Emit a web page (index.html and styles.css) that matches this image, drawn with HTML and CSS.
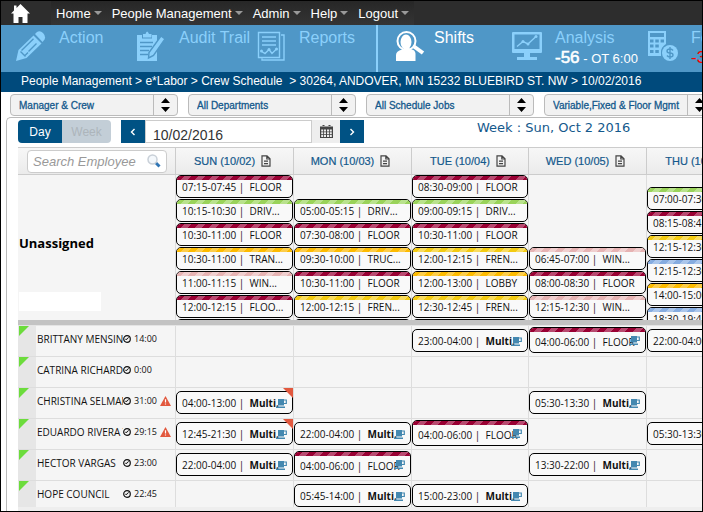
FILE: index.html
```html
<!DOCTYPE html>
<html lang="en">
<head>
<meta charset="utf-8">
<title>Crew Schedule</title>
<link rel="stylesheet" href="styles.css">
</head>
<body>
<svg class="defs" aria-hidden="true">
  <symbol id="doc" viewBox="0 0 10 12"><path d="M1 .8h5l3 3v7.4H1zM5.8 1v3H9M3 6.2h4M3 8.6h4" fill="none" stroke="#444" stroke-width="1.2"/></symbol>
  <symbol id="cup" viewBox="0 0 11 9"><path d="M2 0h6v6.500H2zM0 7.500h9V9H0z" fill="#4488b0"/><path d="M8 1h2.300v3.500H8" fill="none" stroke="#4488b0" stroke-width="1.200"/></symbol>
  <symbol id="clock" viewBox="0 0 8 8"><circle cx="4" cy="4" r="3.300" fill="none" stroke="#111" stroke-width="1.200"/><path d="M5.500 2.300L4 4.300H2.300" fill="none" stroke="#111"/></symbol>
  <symbol id="warn" viewBox="0 0 11 10"><path d="M5.500 0L11 10H0z" fill="#e2583e"/><path d="M5.500 3.200v3.400M5.500 7.400v1.200" stroke="#fff" stroke-width="1.200"/></symbol>
  <symbol id="spin" viewBox="0 0 9 14"><path d="M4.500 0L9 5H0zM0 9h9l-4.500 5z" fill="#000"/></symbol>
</svg>

<nav class="topnav">
  <a class="home" href="#" aria-label="Start page"><svg viewBox="0 0 19 19"><path d="M9.500 0L19 9.500h-2.500V19h-5v-6h-4v6h-5V9.500H0L3 6.500V1.500h2.500V4z" fill="#fff"/></svg></a>
  <div class="menu">
    <a href="#">Home</a><a href="#">People Management</a><a href="#">Admin</a><a href="#">Help</a><a href="#">Logout</a>
  </div>
</nav>

<div class="modules">
  <a class="module" href="#">
    <svg viewBox="0 0 30 30"><path d="M0 30l2.500-11L17.500 4.500l8 8L10.500 27z"/><path d="M19 3l2-2q3-2 6 1t1.500 6.500L26.500 11z"/><path class="cut" d="M5.500 19.500L17.500 7.700M9 24.500l3-3M4.500 20.500l5 5M12.500 20.500L20.500 12.500"/></svg>
    <span>Action</span>
  </a>
  <a class="module" href="#">
    <svg viewBox="0 0 30 30"><path d="M1 4h5v3.500h10V4h5v26H1z"/><path d="M7 3h2.500q1.500-5 3.500 0h2.500v3.500H7z"/><path class="cut" d="M4 11.500h13M4 15.500h12M4 19.500h9M4 23.500h8"/><path class="edge" d="M25 5l4 3-11.500 16.500L12.500 27l.5-5.500z"/></svg>
    <span>Audit Trail</span>
  </a>
  <a class="module" href="#">
    <svg viewBox="0 0 30 30"><path class="line" d="M2.500 1.500h21v25h-21zM25 4h3v25H6v-1.500M6 6h14M6 10h14M6 14h14M5 20l4 2.500 4-4 3 4 5-5"/><circle cx="5.500" cy="20" r="1.500"/><circle cx="13" cy="18.500" r="1.500"/><circle cx="20.500" cy="18" r="1.500"/></svg>
    <span>Reports</span>
  </a>
  <a class="module active" href="#">
    <svg viewBox="0 0 30 30"><path d="M1 30v-6q0-4 6-5.500L10 17h4l3 1.500q3 .5 3.500 4V30q-10 1-19.500 0z"/><ellipse cx="11" cy="11" rx="5.500" ry="7.500"/><circle class="ring" cx="11.500" cy="10" r="9"/><path class="handle" d="M19 15.500l9 6.500"/></svg>
    <span>Shifts</span>
  </a>
  <a class="module wide" href="#">
    <svg viewBox="0 0 30 30"><path d="M1 1h28q1 0 1 1v19q0 1-1 1H1q-1 0-1-1V2q0-1 1-1zM2.500 3.500v14.500h25V3.500zM12 22h6v4h7v3H5v-3h7z" fill-rule="evenodd"/><path class="line" d="M5 15.500l6-5 5 2.500 8-7.500"/><circle cx="11" cy="10.500" r="1.500"/><circle cx="16" cy="13" r="1.500"/><circle cx="24" cy="5.500" r="1.500"/></svg>
    <span>Analysis<small><b>-56</b> - OT 6:00</small></span>
  </a>
  <a class="module" href="#">
    <svg viewBox="0 0 30 30"><path d="M0 0h18v13q-5 3-5 8v4H0zM2 2v4h14V2zM2 8.500v3h3.500v-3zM7.300 8.500v3h3.500v-3zM12.600 8.500v3H16v-3zM2 13.500v3h3.500v-3zM7.300 13.500v3h3.500v-3zM2 19v3h3.500v-3zM7.300 19v3h3.500v-3z" fill-rule="evenodd"/><circle cx="22" cy="22" r="8"/><path class="cut" d="M25 19.500q-1-1.500-3-1.500-3 0-3 2t3 2 3 2-3 2q-2 0-3-1.500M22 16v12"/></svg>
    <span>Forecast<small class="neg"><b>-32</b></small></span>
  </a>
</div>

<div class="crumbs">
  <a href="#">People Management</a> &gt; <a href="#">e*Labor</a> &gt; <a href="#">Crew Schedule</a> &nbsp;&gt; 30264, ANDOVER, MN 15232 BLUEBIRD ST. NW &gt; 10/02/2016
</div>

<div class="filters">
  <div class="filter"><select aria-label="Role"><option>Manager &amp; Crew</option></select><span><svg><use href="#spin"/></svg></span></div>
  <div class="filter"><select aria-label="Department"><option>All Departments</option></select><span><svg><use href="#spin"/></svg></span></div>
  <div class="filter"><select aria-label="Jobs"><option>All Schedule Jobs</option></select><span><svg><use href="#spin"/></svg></span></div>
  <div class="filter"><select aria-label="Shift type"><option>Variable,Fixed &amp; Floor Mgmt</option></select><span><svg><use href="#spin"/></svg></span></div>
</div>

<main class="panel">
  <div class="toolbar">
    <div class="range"><button class="on">Day</button><button disabled>Week</button></div>
    <div class="date">
      <button class="step" aria-label="Previous"><svg viewBox="0 0 8 8"><path d="M5.500 1L2.500 4l3 3"/></svg></button>
      <input type="text" aria-label="Date" value="10/02/2016">
      <button class="cal" aria-label="Calendar"><svg viewBox="0 0 13 13"><path d="M0 1.500h13V13H0zM1.200 4.500v2h2v-2zM4 4.500v2h2v-2zM7 4.500v2h2v-2zM9.800 4.500v2h2v-2zM1.200 7.300v2h2v-2zM4 7.300v2h2v-2zM7 7.300v2h2v-2zM9.800 7.300v2h2v-2zM1.200 10v2h2v-2zM4 10v2h2v-2zM7 10v2h2v-2zM9.800 10v2h2v-2zM2.500 0h2v2h-2zM8.500 0h2v2h-2z" fill="#444" fill-rule="evenodd"/></svg></button>
      <button class="step" aria-label="Next"><svg viewBox="0 0 8 8"><path d="M2.500 1l3 3-3 3"/></svg></button>
    </div>
    <h1>Week : Sun, Oct 2 2016</h1>
  </div>

  <table class="schedule">
    <colgroup><col class="c-name"><col class="c-day"><col class="c-day"><col class="c-mid"><col class="c-day"><col class="c-day"></colgroup>
    <thead>
      <tr>
        <th><div class="search"><input type="text" aria-label="Search Employee" placeholder="Search Employee"><svg viewBox="0 0 14 14"><path d="M8.500 8.500l4 4" stroke="#2f75b5" stroke-width="3"/><circle cx="5.500" cy="5.500" r="4.500" fill="#f4f8fc" stroke="#c9d0d8" stroke-width="1.500"/></svg></div></th>
        <th><a href="#">SUN (10/02)</a><svg><use href="#doc"/></svg></th>
        <th><a href="#">MON (10/03)</a><svg><use href="#doc"/></svg></th>
        <th><a href="#">TUE (10/04)</a><svg><use href="#doc"/></svg></th>
        <th><a href="#">WED (10/05)</a><svg><use href="#doc"/></svg></th>
        <th><a href="#">THU (10/06)</a><svg><use href="#doc"/></svg></th>
      </tr>
    </thead>
    <tbody class="open">
      <tr>
        <th><div class="group">Unassigned</div></th>
        <td><div class="stack">
          <div class="chip floor">07:15-07:45 |&nbsp; FLOOR</div>
          <div class="chip drive">10:15-10:30 |&nbsp; DRIV...</div>
          <div class="chip floor">10:30-11:00 |&nbsp; FLOOR</div>
          <div class="chip lobby">10:30-11:00 |&nbsp; TRAN...</div>
          <div class="chip window">11:00-11:15 |&nbsp; WIN...</div>
          <div class="chip floor">12:00-12:15 |&nbsp; FLOO...</div>
          <div class="chip"></div>
        </div></td>
        <td><div class="stack skip-one">
          <div class="chip drive">05:00-05:15 |&nbsp; DRIV...</div>
          <div class="chip floor">07:30-08:00 |&nbsp; FLOOR</div>
          <div class="chip lobby">09:30-10:00 |&nbsp; TRUC...</div>
          <div class="chip floor">10:30-11:00 |&nbsp; FLOOR</div>
          <div class="chip fries">12:00-12:15 |&nbsp; FREN...</div>
          <div class="chip"></div>
        </div></td>
        <td><div class="stack">
          <div class="chip floor">08:30-09:00 |&nbsp; FLOOR</div>
          <div class="chip drive">09:00-09:15 |&nbsp; DRIV...</div>
          <div class="chip floor">10:30-11:00 |&nbsp; FLOOR</div>
          <div class="chip fries">12:00-12:15 |&nbsp; FREN...</div>
          <div class="chip lobby">12:00-13:00 |&nbsp; LOBBY</div>
          <div class="chip fries">12:30-12:45 |&nbsp; FREN...</div>
          <div class="chip"></div>
        </div></td>
        <td><div class="stack skip-three">
          <div class="chip window">06:45-07:00 |&nbsp; WIN...</div>
          <div class="chip floor">08:00-08:30 |&nbsp; FLOOR</div>
          <div class="chip window">12:15-12:30 |&nbsp; WIN...</div>
          <div class="chip"></div>
        </div></td>
        <td><div class="stack skip-half">
          <div class="chip drive">07:00-07:30 |&nbsp; DRIV...</div>
          <div class="chip floor">08:15-08:45 |&nbsp; FLOOR</div>
          <div class="chip fries">12:15-12:30 |&nbsp; FREN...</div>
          <div class="chip grill">12:15-12:30 |&nbsp; GRILL</div>
          <div class="chip lobby">14:00-15:00 |&nbsp; LOBBY</div>
          <div class="chip grill">18:30-19:45 |&nbsp; GRILL</div>
        </div></td>
      </tr>
      <tr class="bar"><td colspan="6"></td></tr>
    </tbody>
    <tbody class="crew">
      <tr>
        <th><div class="who"><span>BRITTANY MENSING</span><svg><use href="#clock"/></svg><time>14:00</time></div></th>
        <td></td><td></td>
        <td><div class="chip">23:00-04:00 |&nbsp; <b>Multi.</b><svg><use href="#cup"/></svg></div></td>
        <td><div class="chip floor">04:00-06:00 |&nbsp; FLOOR<svg><use href="#cup"/></svg></div></td>
        <td><div class="chip">22:00-04:00 |&nbsp; <b>Multi.</b></div></td>
      </tr>
      <tr>
        <th><div class="who"><span>CATRINA RICHARDS</span><svg><use href="#clock"/></svg><time>0:00</time></div></th>
        <td></td><td></td><td></td><td></td><td></td>
      </tr>
      <tr>
        <th><div class="who"><span>CHRISTINA SELMAN</span><svg><use href="#clock"/></svg><time>31:00</time><svg class="warn"><use href="#warn"/></svg></div></th>
        <td class="flag"><div class="chip">04:00-13:00 |&nbsp; <b>Multi.</b><svg><use href="#cup"/></svg></div></td>
        <td></td><td></td>
        <td><div class="chip">05:30-13:30 |&nbsp; <b>Multi.</b><svg><use href="#cup"/></svg></div></td>
        <td></td>
      </tr>
      <tr>
        <th><div class="who"><span>EDUARDO RIVERA T</span><svg><use href="#clock"/></svg><time>29:15</time><svg class="warn"><use href="#warn"/></svg></div></th>
        <td class="flag"><div class="chip">12:45-21:30 |&nbsp; <b>Multi.</b><svg><use href="#cup"/></svg></div></td>
        <td><div class="chip">22:00-04:00 |&nbsp; <b>Multi.</b><svg><use href="#cup"/></svg></div></td>
        <td><div class="chip floor">04:00-06:00 |&nbsp; FLOOR<svg><use href="#cup"/></svg></div></td>
        <td></td>
        <td><div class="chip">05:30-13:30 |&nbsp; <b>Multi.</b></div></td>
      </tr>
      <tr>
        <th><div class="who"><span>HECTOR VARGAS</span><svg><use href="#clock"/></svg><time>23:00</time></div></th>
        <td><div class="chip">22:00-04:00 |&nbsp; <b>Multi.</b><svg><use href="#cup"/></svg></div></td>
        <td><div class="chip floor">04:00-06:00 |&nbsp; FLOOR<svg><use href="#cup"/></svg></div></td>
        <td></td>
        <td><div class="chip">13:30-22:00 |&nbsp; <b>Multi.</b><svg><use href="#cup"/></svg></div></td>
        <td></td>
      </tr>
      <tr>
        <th><div class="who"><span>HOPE COUNCIL</span><svg><use href="#clock"/></svg><time>22:45</time></div></th>
        <td></td>
        <td><div class="chip">05:45-14:00 |&nbsp; <b>Multi.</b><svg><use href="#cup"/></svg></div></td>
        <td><div class="chip">15:00-23:00 |&nbsp; <b>Multi.</b><svg><use href="#cup"/></svg></div></td>
        <td></td><td></td>
      </tr>
    </tbody>
  </table>
  <div class="foot"></div>
</main>
</body>
</html>
```
FILE: styles.css
```css
* { box-sizing: border-box; }

body {
  margin: 0;
  min-height: 100vh;
  border: 1px solid #000;
  overflow: hidden;
  background: #fff;
  font-family: "Liberation Sans", Arial, sans-serif;
  font-size: 12px;
}
a { color: inherit; text-decoration: none; }
button, input, select { font: inherit; border: 0; margin: 0; padding: 0; border-radius: 0; }
svg { display: block; flex: none; }
.defs { display: none; }

/* Top navigation */
.topnav { display: flex; height: 24px; background: #2d2d2d; color: #fff; font-size: 13px; }
.home { padding: 3px 0 0 10px; width: 50px; }
.home svg { width: 19px; height: 19px; }
.menu { display: flex; gap: 10px; padding: 0 5px; background: linear-gradient(#272727, #343434); }
.menu a { display: flex; align-items: center; gap: 3px; }
.menu a::after { content: ""; border: 4px solid transparent; border-top-color: #999; border-bottom: 0; }

/* Module bar */
.modules { display: flex; height: 47px; padding-left: 15px; overflow: hidden; background: #4f97c7; color: #8bd0fb; }
.module { display: flex; flex: none; gap: 13px; width: 120px; padding-top: 4px; font-size: 16px; line-height: 18px; white-space: nowrap; }
.module svg { width: 30px; height: 30px; margin-top: 2px; fill: currentColor; }
.module .cut { fill: none; stroke: #4f97c7; stroke-width: 1.4; }
.module .line { fill: none; stroke: currentColor; stroke-width: 1.4; }
.module .edge { stroke: #4f97c7; stroke-width: 1.4; }
.module .ring { fill: none; stroke: currentColor; stroke-width: 2; }
.module .handle { stroke: currentColor; stroke-width: 4; }
.module.active { width: 136px; padding-left: 17px; gap: 9px; border-left: 2px solid #8bd0fb; color: #fff; }
.module.wide { width: 136px; }
.module small { display: block; padding-top: 1px; color: #fff; font-size: 13px; line-height: 20px; }
.module small b { font-size: 17px; font-weight: 400; -webkit-text-stroke: 0.6px currentColor; }
.module .neg { color: #f00; }
.module .neg b { -webkit-text-stroke: 0; }

.crumbs { height: 20px; padding-left: 20px; overflow: hidden; background: #004a7c; color: #fff; line-height: 19px; white-space: nowrap; }

/* Filters */
.filters { display: flex; gap: 10px; padding: 2px 0 1px 9px; overflow: hidden; }
.filter { display: flex; flex: none; width: 168px; height: 22px; border: 1px solid #bbb; border-radius: 4px; background: #f2f2f2; }
.filter select { flex: 1; min-width: 0; padding-left: 8px; appearance: none; background: none; color: #14598c; font-size: 10px; -webkit-text-stroke: 0.3px #14598c; }
.filter span { display: grid; place-items: center; width: 24px; border-left: 1px solid #bbb; }
.filter svg { width: 9px; height: 14px; }

/* Schedule panel */
.panel { margin-left: 5px; padding: 2px 0 0 11px; overflow: hidden; border: 1px solid #bbb; border-width: 1px 0 0 1px; border-radius: 5px 0 0 0; }
.toolbar { display: flex; height: 23px; margin-bottom: 4px; }
.range { display: flex; margin-right: 10px; border-radius: 4px; overflow: hidden; }
.range button { width: 49px; background: #c3ced7; color: #adb5bb; }
.range .on { width: 44px; background: #005284; color: #fff; }
.date { display: flex; width: 243px; }
.date input { flex: 1; min-width: 0; padding: 6px 0 0 7px; border: 1px solid #ccc; color: #333; font-size: 14px; }
.step { display: grid; place-items: center; width: 24px; background: #005284; }
.step svg { width: 8px; height: 8px; fill: none; stroke: #fff; stroke-width: 1.4; }
.cal { display: grid; place-items: center; width: 28px; background: #eee; }
.cal svg { width: 13px; height: 13px; }
.toolbar h1 { margin: 0 0 0 113px; color: #14598c; font: 13px/16px "DejaVu Sans", Verdana, sans-serif; white-space: nowrap; }

.schedule { width: 746px; table-layout: fixed; border-collapse: separate; border-spacing: 0; }
.c-name { width: 158px; }
.c-day { width: 118px; }
.c-mid { width: 117px; }
.schedule th, .schedule td { padding: 0; border-right: 1px solid #ddd; background: #f5f5f5; vertical-align: top; font-weight: 400; }
.schedule thead th { height: 28px; border: 1px solid #ccc; border-left: 0; background: linear-gradient(#f7f7f7, #ebebeb); color: #14598c; font-size: 11px; vertical-align: middle; }
.schedule thead th > a { -webkit-text-stroke: 0.2px #14598c; }
.schedule thead th > svg { display: inline-block; width: 10px; height: 12px; margin: 0 4px 0 6px; vertical-align: -2px; }
.search { display: flex; align-items: center; width: 140px; height: 23px; margin-left: 9px; padding: 0 5px; border: 1px solid #ccc; border-radius: 4px; background: #fff; }
.search input { flex: 1; min-width: 0; background: none; font-size: 13px; font-style: italic; }
.search input::placeholder { color: #999; opacity: 1; }
.search svg { width: 14px; height: 14px; }

.open, .crew { font: 10px/14px "Open Sans", sans-serif; }
.group { display: flex; flex-direction: column; justify-content: flex-end; gap: 39px; height: 145px; padding: 0 0 9px 1px; text-align: left; font-size: 13px; font-weight: 700; line-height: 20px; }
.group::after { content: ""; width: 82px; height: 19px; background: #fff; }
.stack { display: flex; flex-direction: column; gap: 1px; height: 145px; overflow: hidden; }
.skip-one { padding-top: 24px; }
.skip-three { padding-top: 72px; }
.skip-half { padding-top: 12px; }
.schedule .bar td { height: 6px; border: 0; border-bottom: 1px solid #e4e4e4; background: #c3c3c3; }

/* Shift chips; the stripe colour marks the station */
.chip { position: relative; flex: none; height: 23px; padding: 4px 0 0 5px; border: 1px solid #000; border-radius: 5px; overflow: hidden; background: #f9f9f9; color: #111; white-space: nowrap; }
.chip::before { content: ""; position: absolute; inset: 0 0 auto; height: 4px; background: repeating-linear-gradient(135deg, var(--dark, transparent) 0 5px, var(--light, transparent) 5px 10px); }
.chip svg { position: absolute; right: 5px; top: 7px; width: 11px; height: 9px; }
.floor { --dark: #990033; --light: #b84a70; }
.drive { --dark: #9ad35a; --light: #b9e28d; }
.lobby { --dark: #fdbb00; --light: #fdcd4a; }
.fries { --dark: #f3cb12; --light: #f8dc60; }
.window { --dark: #e6b3b3; --light: #f0cfcf; }
.grill { --dark: #86ace0; --light: #abc6eb; }

/* Crew rows */
.crew th, .crew td { height: 31px; border-bottom: 1px solid #ddd; }
.crew td { padding-top: 3px; }
.crew td:has(.floor) { padding-top: 1px; }
.crew .floor { height: 26px; padding-top: 7px; }
.crew .floor svg { top: 8px; }
.crew tr:last-child > * { height: 26px; border-bottom: 0; }
.who { position: relative; display: flex; align-items: center; height: 26px; padding-left: 19px; background: linear-gradient(90deg, #e6e6e6 18px, transparent 18px); color: #111; }
.crew tr:not(:last-child) .who { height: 30px; padding-bottom: 4px; }
.who::before { content: ""; position: absolute; top: 0; left: 1px; border: 5px solid; border-color: #6cdc3c transparent transparent #6cdc3c; }
.who span { width: 86px; overflow: hidden; white-space: nowrap; text-align: left; }
.who svg { width: 8px; height: 8px; }
.who time { margin: 0 3px; font-size: 9px; }
.who .warn { width: 11px; height: 10px; }
.flag { position: relative; }
.flag::after { content: ""; position: absolute; top: 0; right: 0; border: 5px solid; border-color: #e2583e #e2583e transparent transparent; }

.foot { height: 4px; background: #eee; }
```
